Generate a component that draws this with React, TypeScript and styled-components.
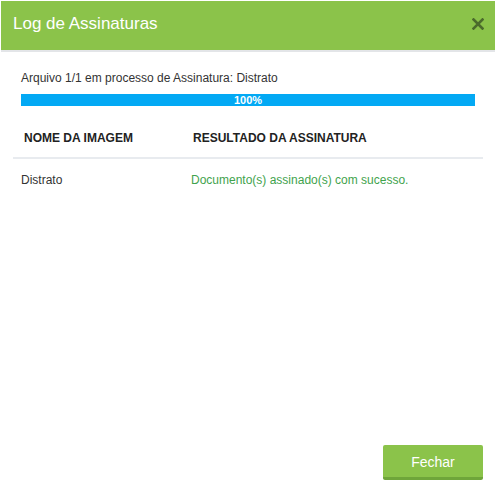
import React from "react";
import styled, { createGlobalStyle } from "styled-components";

const Global = createGlobalStyle`
  html, body { margin: 0; padding: 0; background: #fff; }
  body { font-family: "Liberation Sans", Arial, sans-serif; color: #333; }
`;

const Modal = styled.div`
  margin: 1px 2px 0 1px;
  width: 494px;
  height: 491px;
  display: flex;
  flex-direction: column;
  background: #fff;
`;

const Header = styled.div`
  height: 49px;
  background: #8bc34a;
  border-bottom: 2px solid #e3e5e8;
  display: flex;
  align-items: center;
  justify-content: space-between;
  padding: 0 11px 0 12px;
  box-sizing: content-box;
`;

const Title = styled.h4`
  margin: 0;
  font-size: 17px;
  font-weight: normal;
  color: #fff;
  line-height: 20px;
  margin-top: -4px;
`;

const Close = styled.button`
  border: 0;
  background: transparent;
  padding: 0;
  width: 12px;
  height: 12px;
  display: flex;
  margin-top: -3px;
  cursor: pointer;
`;

const Body = styled.div`
  flex: 1;
  padding: 19px 12px 0 12px;
  display: flex;
  flex-direction: column;
`;

const Status = styled.div`
  padding: 0 8px;
  font-size: 12px;
  line-height: 14px;
  color: #333;
`;

const Track = styled.div`
  margin: 9px 8px 0 8px;
  height: 12px;
  background: #eee;
`;

const Fill = styled.div`
  height: 100%;
  background: #03a9f4;
  color: #fff;
  font-size: 11px;
  font-weight: bold;
  line-height: 12px;
  text-align: center;
`;

const Table = styled.div`
  margin-top: 19px;
  display: grid;
  grid-template-columns: 169px 1fr;
`;

const Th = styled.div<{ $pl: number }>`
  font-size: 12px;
  font-weight: bold;
  color: #222;
  line-height: 14px;
  padding: 6px 0 12px ${(p) => p.$pl}px;
  border-bottom: 2px solid #e8ebef;
`;

const Td = styled.div<{ $pl: number; $ok?: boolean }>`
  font-size: 12px;
  line-height: 14px;
  color: ${(p) => (p.$ok ? "#3fa34d" : "#333")};
  padding: 14px 0 0 ${(p) => p.$pl}px;
`;

const Footer = styled.div`
  display: flex;
  justify-content: flex-end;
  padding: 0 12px 12px 0;
`;

const Button = styled.button`
  width: 100px;
  height: 35px;
  border: 0;
  border-bottom: 3px solid #6fa53a;
  border-radius: 2px;
  background: #8bc34a;
  color: #fff;
  font-family: "Liberation Sans", Arial, sans-serif;
  font-size: 14px;
  padding: 2px 0 0 0;
  cursor: pointer;
`;

export default function App() {
  return (
    <>
      <Global />
      <Modal>
        <Header>
          <Title>Log de Assinaturas</Title>
          <Close aria-label="Fechar">
            <svg width="12" height="12" viewBox="0 0 12 12">
              <path d="M1.5 1.5 L10.5 10.5 M10.5 1.5 L1.5 10.5" stroke="#4b6b2c" strokeWidth="2.6" strokeLinecap="square" />
            </svg>
          </Close>
        </Header>
        <Body>
          <Status>Arquivo 1/1 em processo de Assinatura: Distrato</Status>
          <Track>
            <Fill style={{ width: "100%" }}>100%</Fill>
          </Track>
          <Table>
            <Th $pl={11}>NOME DA IMAGEM</Th>
            <Th $pl={11}>RESULTADO DA ASSINATURA</Th>
            <Td $pl={8}>Distrato</Td>
            <Td $pl={9} $ok>Documento(s) assinado(s) com sucesso.</Td>
          </Table>
        </Body>
        <Footer>
          <Button>Fechar</Button>
        </Footer>
      </Modal>
    </>
  );
}
